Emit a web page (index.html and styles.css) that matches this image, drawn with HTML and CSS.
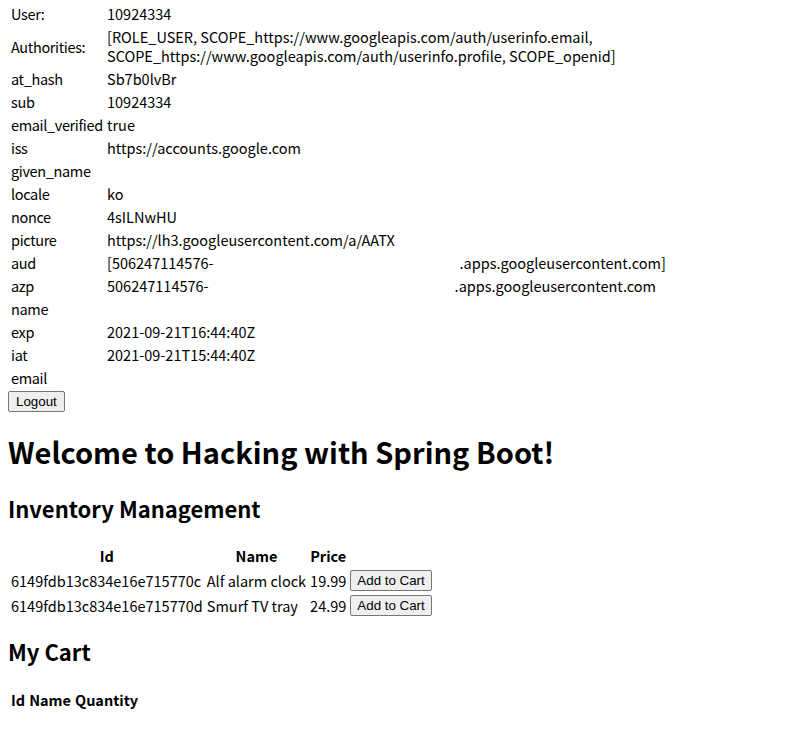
FILE: index.html
```html
<!DOCTYPE html>
<html>
<head>
<meta charset="utf-8">
<title>Hacking with Spring Boot</title>
<link rel="stylesheet" href="styles.css">
</head>
<body>
<table class="info">
  <tr><td class="label">User:</td><td>10924334</td></tr>
  <tr><td class="label">Authorities:</td><td>[ROLE_USER, SCOPE_https://www.googleapis.com/auth/userinfo.email,<br>SCOPE_https://www.googleapis.com/auth/userinfo.profile, SCOPE_openid]</td></tr>
  <tr><td class="label">at_hash</td><td>Sb7b0lvBr</td></tr>
  <tr><td class="label">sub</td><td>10924334</td></tr>
  <tr><td class="label">email_verified</td><td>true</td></tr>
  <tr><td class="label">iss</td><td>https://accounts.google.com</td></tr>
  <tr><td class="label">given_name</td><td></td></tr>
  <tr><td class="label">locale</td><td>ko</td></tr>
  <tr><td class="label">nonce</td><td>4sILNwHU</td></tr>
  <tr><td class="label">picture</td><td>https://lh3.googleusercontent.com/a/AATX</td></tr>
  <tr><td class="label">aud</td><td>[506247114576-<span class="redact"></span>.apps.googleusercontent.com]</td></tr>
  <tr><td class="label">azp</td><td>506247114576-<span class="redact"></span>.apps.googleusercontent.com</td></tr>
  <tr><td class="label">name</td><td></td></tr>
  <tr><td class="label">exp</td><td>2021-09-21T16:44:40Z</td></tr>
  <tr><td class="label">iat</td><td>2021-09-21T15:44:40Z</td></tr>
  <tr><td class="label">email</td><td></td></tr>
</table>
<form class="logout"><button type="button" class="btn">Logout</button></form>
<h1>Welcome to Hacking with Spring Boot!</h1>
<h2>Inventory Management</h2>
<table class="items">
  <thead>
    <tr><th>Id</th><th>Name</th><th>Price</th><th></th></tr>
  </thead>
  <tbody>
    <tr><td>6149fdb13c834e16e715770c</td><td>Alf alarm clock</td><td>19.99</td><td><button type="button" class="btn">Add to Cart</button></td></tr>
    <tr><td>6149fdb13c834e16e715770d</td><td>Smurf TV tray</td><td>24.99</td><td><button type="button" class="btn">Add to Cart</button></td></tr>
  </tbody>
</table>
<h2 class="cart-title">My Cart</h2>
<table class="cart">
  <thead>
    <tr><th>Id</th><th>Name</th><th>Quantity</th></tr>
  </thead>
</table>
</body>
</html>
```

FILE: styles.css
```css
html {
  background: #ffffff;
}

body {
  margin: 1px 8px 8px;
  font-family: "Noto Sans CJK KR", "Noto Sans", sans-serif;
  font-size: 14.5px;
  line-height: 19px;
  color: #000000;
}

table {
  border-spacing: 2px;
}

td, th {
  padding: 1px;
  line-height: 19px;
}

.info td {
  vertical-align: middle;
  white-space: nowrap;
}

.info .label {
  width: 92px;
  letter-spacing: -0.35px;
}

.redact {
  display: inline-block;
  width: 246px;
}

.logout {
  margin: 0;
  padding-top: 1px;
  display: flex;
}

.btn {
  font-family: "Liberation Sans", Arial, sans-serif;
  font-size: 13.33px;
  line-height: 17px;
  padding: 1px 6px;
  border: 1px solid #767676;
  border-radius: 2px;
  background: #efefef;
  color: #000000;
  vertical-align: top;
}

.logout .btn {
  padding: 1px 7px;
}

h1 {
  font-size: 29px;
  line-height: 37px;
  font-weight: bold;
  margin: 21px 0;
}

h2 {
  font-size: 22px;
  line-height: 28px;
  font-weight: bold;
  margin: 24px 0 20px;
}

.cart-title {
  margin: 18px 0 22px;
}

.items th {
  text-align: center;
  padding: 2px 1px;
}

.items td {
  white-space: nowrap;
}
```
